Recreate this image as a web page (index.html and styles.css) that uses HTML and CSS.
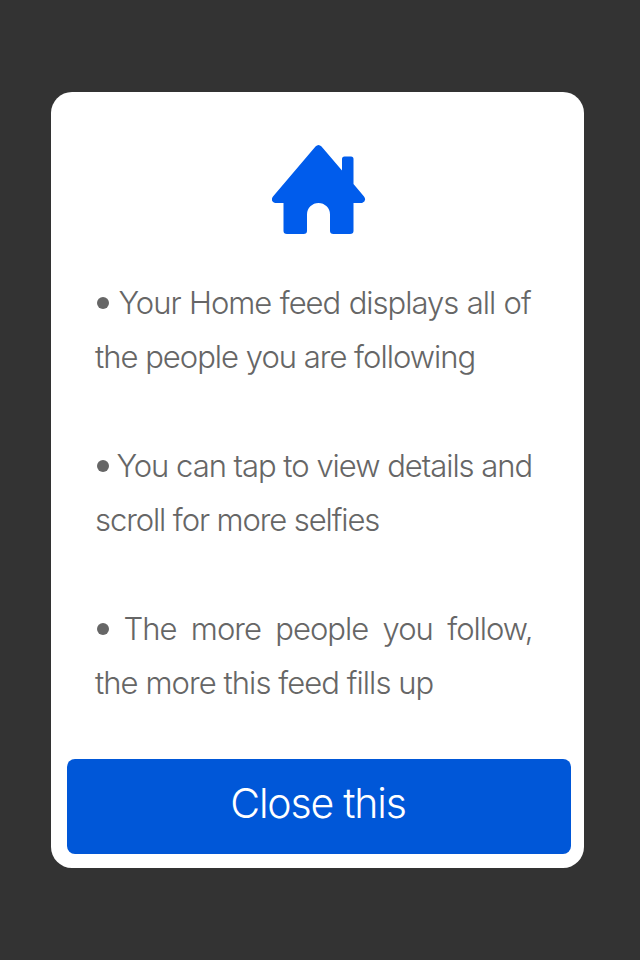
FILE: index.html
```html
<!DOCTYPE html>
<html lang="en">
<head>
<meta charset="utf-8">
<title>Home feed</title>
<link rel="stylesheet" href="styles.css">
</head>
<body>
<main class="card">
  <svg class="home" viewBox="0 0 94 90" aria-hidden="true">
    <path d="M43.5 1.500Q46.500-1.500 49.500 1.500L70 25.500V14Q70 11.500 72.500 11.500H79Q81.500 11.500 81.500 14V39L92 51.500Q95 56 90 58H81.500V86Q81.500 89 78 89H61.500Q58 89 58 86V69.500A11.500 11.500 0 0 0 35 69.500V86Q35 89 31.500 89H15Q11.500 89 11.500 86V58H3Q-2 56 1 51.500Z"/>
  </svg>
  <div class="tips">
    <p class="tip"><span class="line a1"><i class="dot"></i>Your Home feed displays all of</span><span class="line a2">the people you are following</span></p>
    <p class="tip"><span class="line b1"><i class="dot"></i>You can tap to view details and</span><span class="line b2">scroll for more selfies</span></p>
    <p class="tip"><span class="line c1"><i class="dot"></i>The more people you follow,</span><span class="line c2">the more this feed fills up</span></p>
  </div>
  <button class="close">Close this</button>
</main>
</body>
</html>
```
FILE: styles.css
```css
* { box-sizing: border-box; }
body {
  margin: 0;
  height: 960px;
  padding: 92px 56px 92px 51px;
  background: #333;
  font-family: Inter, "Liberation Sans", sans-serif;
  font-weight: 300;
}
.card {
  display: flex;
  flex-direction: column;
  width: 533px;
  height: 776px;
  padding: 53px 13px 14px 16px;
  border-radius: 21px;
  background: #fff;
}
.home { width: 94px; height: 90px; margin-left: 205px; fill: #005cec; flex: none; }
.tips { margin: 41px 0 0 28px; color: #666; font-size: 31px; line-height: 54.3px; letter-spacing: -1px; }
.tip { margin: 0 0 54.3px; }
.tip:last-child { margin-bottom: 0; }
.line { display: block; white-space: nowrap; }
.dot { display: inline-block; width: 12px; height: 12px; margin: 0 10px 5px 1.5px; border-radius: 50%; background: #666; }
.a1 { word-spacing: .7px; }
.b1 { letter-spacing: -1.02px; }
.b1 .dot { margin-right: 8px; }
.b2 { letter-spacing: -1.1px; }
.c1 { word-spacing: 6.7px; }
.c1 .dot { margin-right: 15px; }
.c2 { letter-spacing: -.94px; }
.close {
  flex: none;
  width: 504px;
  height: 95px;
  margin-top: auto;
  padding: 0 2px 7px 0;
  border: 0;
  border-radius: 8px;
  background: #0057d8;
  color: #fff;
  font: inherit;
  font-size: 41px;
  letter-spacing: -1.2px;
}
```
